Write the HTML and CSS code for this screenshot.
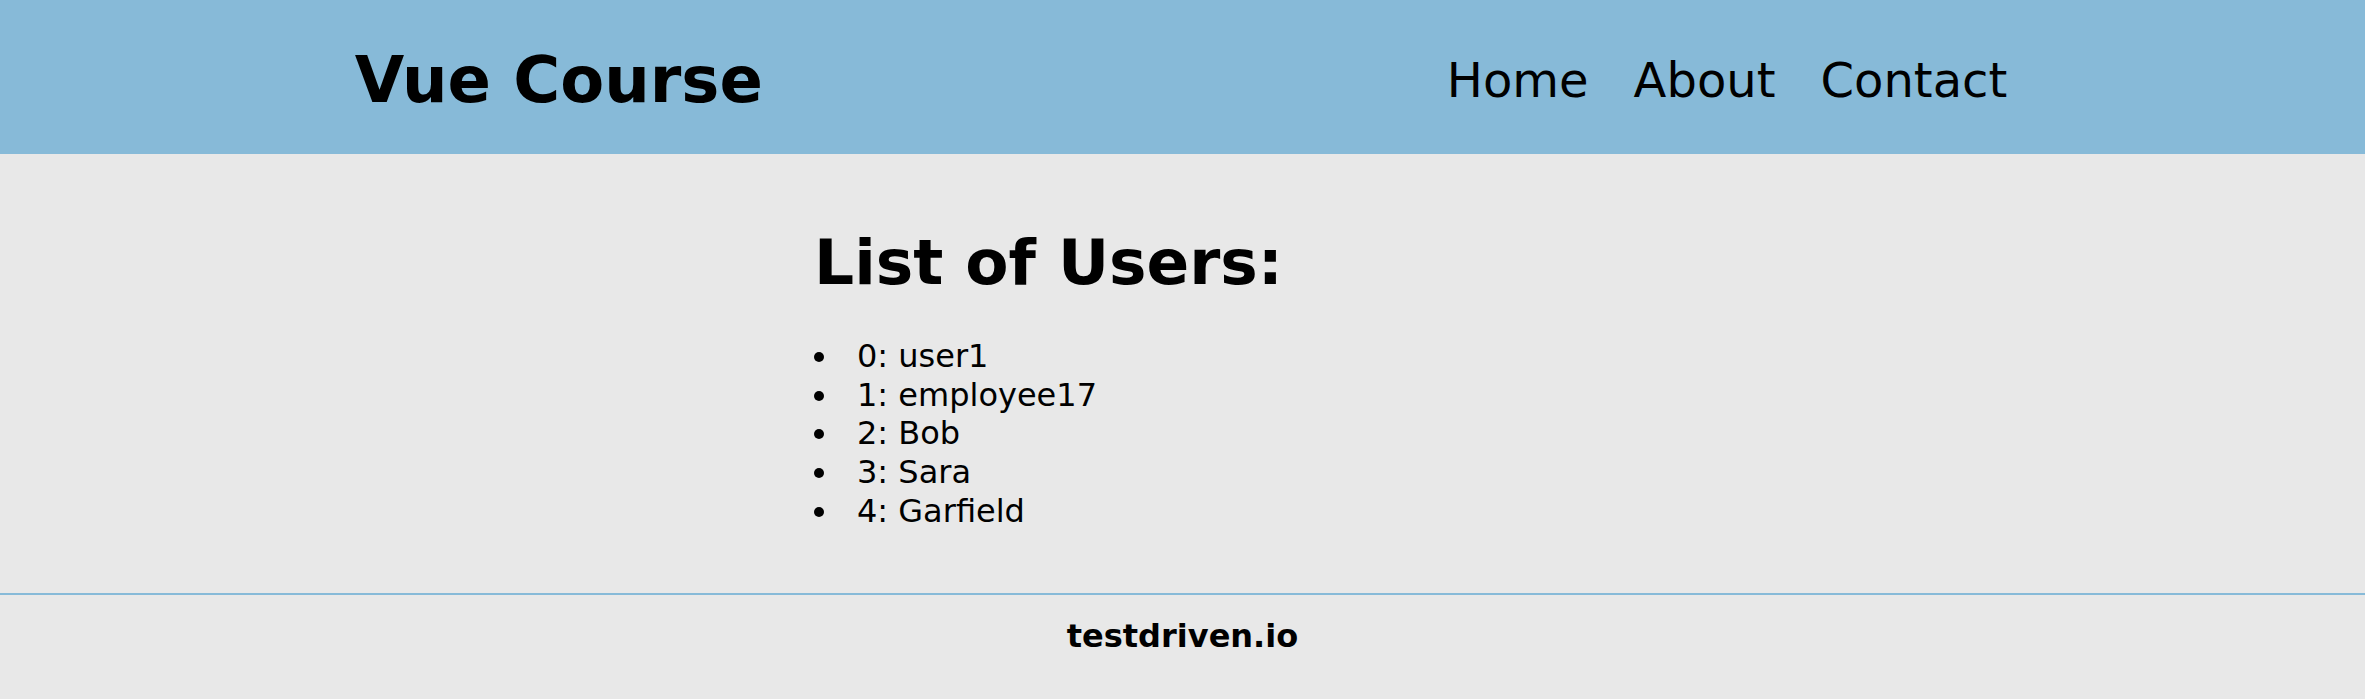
FILE: index.html
```html
<!DOCTYPE html>
<html lang="en">
<head>
  <meta charset="UTF-8" />
  <title>Vue Course</title>
  <link rel="stylesheet" href="styles.css">
</head>
<body>
  <header class="header">
    <div class="header-inner">
      <div class="brand">Vue Course</div>
      <nav class="nav">
        <a href="#">Home</a>
        <a href="#">About</a>
        <a href="#">Contact</a>
      </nav>
    </div>
  </header>

  <main class="main">
    <div class="content">
      <h1>List of Users:</h1>
      <ul class="user-list">
        <li>0: user1</li>
        <li>1: employee17</li>
        <li>2: Bob</li>
        <li>3: Sara</li>
        <li>4: Garfield</li>
      </ul>
    </div>
  </main>

  <footer class="footer">testdriven.io</footer>
</body>
</html>
```

FILE: styles.css
```css
* { box-sizing: border-box; }
html, body { height: 100%; }
body {
  margin: 0;
  font-family: "DejaVu Sans", Verdana, sans-serif;
  background: #e8e8e8;
  color: #000;
  display: flex;
  flex-direction: column;
  overflow: hidden;
}

.header {
  background: #87bad8;
  height: 154px;
  padding-top: 6px;
  display: flex;
  align-items: center;
}
.header-inner {
  width: 70%;
  margin: 0 auto;
  padding-right: 3px;
  display: flex;
  align-items: center;
  justify-content: space-between;
}
.brand {
  font-size: 64px;
  font-weight: bold;
}
.nav {
  display: flex;
  gap: 45px;
}
.nav a {
  color: #000;
  text-decoration: none;
  font-size: 48px;
}

.main {
  flex: 1;
  padding-top: 72px;
  border-bottom: 2px solid #87bad8;
}
.content {
  width: 737px;
  margin: 0 auto;
}
.content h1 {
  margin: 0 0 38px;
  font-size: 63px;
  font-weight: bold;
}
.user-list {
  list-style: none;
  margin: 0;
  padding-left: 43px;
  font-size: 32px;
  line-height: 38.7px;
}
.user-list li::before {
  content: "";
  display: inline-block;
  width: 10px;
  height: 10px;
  border-radius: 50%;
  background: #000;
  vertical-align: 5px;
  margin-left: -43px;
  margin-right: 33px;
}

.footer {
  text-align: center;
  font-weight: bold;
  font-size: 32px;
  padding: 22px 0 44px;
}
```
